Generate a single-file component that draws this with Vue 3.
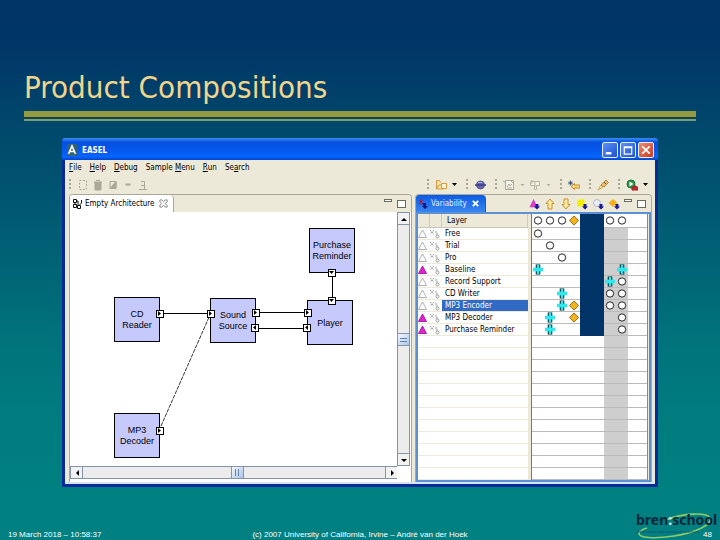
<script setup>
const menus = [
  { key: 'F', rest: 'ile' },
  { key: 'H', rest: 'elp' },
  { key: 'D', rest: 'ebug' },
  { pre: 'Sample ', key: 'M', rest: 'enu' },
  { key: 'R', rest: 'un' },
  { pre: 'Se', key: 'a', rest: 'rch' }
]

const editTools = ['select', 'delete', 'invert', 'remove', 'baseline']
const toolGroups = [
  ['folder', 'drop'],
  ['globe'],
  ['picture', 'dash', 'flag', 'dash'],
  ['back'],
  ['brush'],
  ['run', 'drop']
]
const viewTools = ['addlayer', 'up', 'down', 'addsquare', 'addcircle', 'adddiamond']

// Cell marks: o = circle, d = diamond, p = plus, x = hidden column, . = empty
const heading = 'ooodxxoo'
const layers = [
  { name: 'Free', cells: 'o...xx..' },
  { name: 'Trial', cells: '.o..xx..' },
  { name: 'Pro', cells: '..o.xx..' },
  { name: 'Baseline', cells: 'p...xx.p', on: true },
  { name: 'Record Support', cells: '....xxpo' },
  { name: 'CD Writer', cells: '..p.xxoo' },
  { name: 'MP3 Encoder', cells: '..pdxxoo', selected: true },
  { name: 'MP3 Decoder', cells: '.p.dxx.o', on: true },
  { name: 'Purchase Reminder', cells: '.p..xx.o', on: true }
]
const blankRows = 12

const nodes = [
  { x: 239, y: 16, lines: ['Purchase', 'Reminder'] },
  { x: 44, y: 85, lines: ['CD', 'Reader'] },
  { x: 140, y: 86, lines: ['Sound', 'Source'] },
  { x: 237, y: 88, lines: ['Player'] },
  { x: 44, y: 201, lines: ['MP3', 'Decoder'] }
]
const links = [
  [89, 101, 140, 101],
  [185, 100, 237, 100],
  [185, 116, 237, 116],
  [262, 60, 262, 88]
]
const ports = [
  { x: 89, y: 101, turn: 0 },
  { x: 140, y: 101, turn: 0 },
  { x: 185, y: 100, turn: 0 },
  { x: 185, y: 116, turn: 180 },
  { x: 237, y: 100, turn: 0 },
  { x: 237, y: 116, turn: 180 },
  { x: 262, y: 60, turn: 90 },
  { x: 262, y: 88, turn: 90 },
  { x: 89, y: 218, turn: 0 }
]
</script>

<template>
  <main class="slide">
    <header class="head">
      <h1>Product Compositions</h1>
      <div class="rule"></div>
    </header>

    <section class="window">
      <div class="titlebar">
        <svg class="app-icon" viewBox="0 0 10 12"><rect width="10" height="12" fill="#2f6377" /><path d="M1.5 10 5 2l3.5 8M3 7.5h4" fill="none" stroke="#fff" stroke-width="1.6" /></svg>
        <span class="app-name">EASEL</span>
        <button class="win-btn" aria-label="Minimize"><svg viewBox="0 0 15 15"><path d="M3 11h6" stroke="#fff" stroke-width="2.500" /></svg></button>
        <button class="win-btn" aria-label="Maximize"><svg viewBox="0 0 15 15"><path d="M3.500 4h8v8h-8zM3.500 5h8" fill="none" stroke="#fff" stroke-width="1.300" /></svg></button>
        <button class="win-btn close" aria-label="Close"><svg viewBox="0 0 15 15"><path d="m3.500 3.500 8 8M11.500 3.500l-8 8" stroke="#fff" stroke-width="1.900" /></svg></button>
      </div>

      <nav class="menubar">
        <button v-for="m in menus" :key="m.rest">{{ m.pre }}<u>{{ m.key }}</u>{{ m.rest }}</button>
      </nav>

      <div class="toolbar">
        <div class="group edit">
          <i class="grip"></i>
          <button v-for="t in editTools" :key="t" :aria-label="t">
            <svg viewBox="0 0 12 12" fill="none" stroke="#aca899">
              <path v-if="t === 'select'" d="M2.500 1.500h7v9h-7z" stroke-dasharray="2 1.500" />
              <path v-else-if="t === 'delete'" d="M3 4h6v7H3zM2 3h8L9 4H3zM4 1.500h4" fill="#aca899" />
              <g v-else-if="t === 'invert'"><path d="M3 2.500h6v7H3z" /><path d="M9 2.500v7H3z" fill="#aca899" /></g>
              <path v-else-if="t === 'remove'" d="M3.500 5.500h5" stroke-width="2" />
              <path v-else d="M2 10.500h8M4 2.500h3.500v8M4 6.500h3" />
            </svg>
          </button>
        </div>

        <div v-for="(g, i) in toolGroups" :key="i" class="group">
          <i class="grip"></i>
          <button v-for="(t, j) in g" :key="j" :class="{ small: t === 'drop' || t === 'dash' }" :aria-label="t">
            <svg v-if="t === 'drop'" viewBox="0 0 6 12"><path d="M1 4h5L3.500 7z" /></svg>
            <svg v-else-if="t === 'dash'" viewBox="0 0 6 12"><path d="M1.500 5h4L3.500 7z" fill="#aca899" /></svg>
            <svg v-else viewBox="0 0 12 12" fill="none">
              <g v-if="t === 'folder'" stroke="#d99a3c"><path d="M1.500 10V1.500h3l1 2M1.500 10h7l2.500-4H4z" fill="#fbe4a8" /><path d="M6.500 4.500h5v5h-5z" fill="#fff3d0" /></g>
              <g v-else-if="t === 'globe'"><circle cx="6.500" cy="6" r="4" fill="#6666aa" stroke="#5a5a9c" /><path d="M1 6h11" stroke="#3b3b8a" stroke-width="1.500" /><path d="M4 3.500h4" stroke="#b0b0dd" /></g>
              <g v-else-if="t === 'picture'" stroke="#aca899"><path d="M2.500 1.500h8v9h-8z" fill="#f8f7ef" /><path d="m0 2 3 2M4 8l2-3 1 2 2-2M4 9h5M8 2l2 2" /></g>
              <path v-else-if="t === 'flag'" d="M1.500 2.500h9v4h-3v4h-2v-4h-4zM3 1v4M6 3v5" stroke="#b9b5a6" fill="#f3f1e7" />
              <g v-else-if="t === 'back'"><path d="M3 7.500 6.500 4.500V6H12v3H6.500v1.500z" fill="#f6d985" stroke="#c78b22" /><path d="M2.500 1.500v5M0 4h5M1 2.500l3 3M4 2.500l-3 3" stroke="#263a63" stroke-width=".8" /></g>
              <g v-else-if="t === 'brush'"><path d="m1 11 3-5 2 2z" fill="#fff2b0" stroke="#d4a452" /><path d="m4 6 5-5 2.500 2.500L7 8z" fill="#edbd74" stroke="#c2843b" /><path d="m7 3 2 2" stroke="#555" /></g>
              <g v-else><circle cx="5" cy="5" r="4" fill="#249347" stroke="#18753a" /><path d="M3.500 2.500v5l4-2.500z" fill="#fff" /><path d="M6 8h6v3H6zM8 8V7h2v1" fill="#c82f32" stroke="#9e1c24" /></g>
            </svg>
          </button>
        </div>
      </div>

      <div class="panes">
        <section class="pane editor">
          <div class="tabs">
            <div class="tab">
              <svg viewBox="0 0 10 10" fill="none" stroke="#111"><path d="M1.500.5h3v3h-3zM1.500 5.500h3v3h-3zM5.500 6.500h3v3h-3zM3 3v3M4 2h2v4M9.500 1v3l-2 2" /></svg>
              <span>Empty Architecture</span>
              <button class="tab-x" aria-label="Close tab"><svg viewBox="0 0 10 10"><path d="M1 1h2l2 2 2-2h2v2L7 5l2 2v2H7L5 7 3 9H1V7l2-2-2-2z" fill="#fff" stroke="#777" /></svg></button>
            </div>
            <span class="spacer"></span>
            <button class="min" aria-label="Minimize pane"></button>
            <button class="max" aria-label="Maximize pane"></button>
          </div>
          <div class="editor-body">
            <svg class="canvas">
              <path d="M91 214 140 103" fill="none" stroke="#333" stroke-dasharray="4 1" />
              <line v-for="(l, i) in links" :key="i" :x1="l[0]" :y1="l[1]" :x2="l[2]" :y2="l[3]" stroke="#000" shape-rendering="crispEdges" />
              <g v-for="n in nodes" :key="n.lines[0]">
                <rect :x="n.x" :y="n.y" width="45" height="44" fill="#c6c9fb" stroke="#000" shape-rendering="crispEdges" />
                <text v-for="(t, k) in n.lines" :key="t" :x="n.x + 23" :y="n.y + (n.lines.length === 1 ? 26 : 20 + k * 11)">{{ t }}</text>
              </g>
              <g v-for="(p, i) in ports" :key="i" :transform="`translate(${p.x} ${p.y}) rotate(${p.turn})`">
                <rect x="-3" y="-3" width="7" height="7" fill="#fff" stroke="#000" shape-rendering="crispEdges" />
                <path d="M-1-2v5l3-2.500z" />
              </g>
            </svg>
            <div class="scroll vertical">
              <span class="arrow"><svg viewBox="0 0 8 8"><path d="M1 6h6L4 3z" /></svg></span>
              <span class="track before"></span>
              <span class="thumb"></span>
              <span class="track after"></span>
              <span class="arrow"><svg viewBox="0 0 8 8"><path d="M1 3h6L4 6z" /></svg></span>
            </div>
            <div class="scroll horizontal">
              <span class="arrow"><svg viewBox="0 0 8 8"><path d="M6 1v6L3 4z" /></svg></span>
              <span class="track before"></span>
              <span class="thumb"></span>
              <span class="track after"></span>
              <span class="arrow"><svg viewBox="0 0 8 8"><path d="M3 1v6l3-3z" /></svg></span>
            </div>
          </div>
        </section>

        <section class="pane variability">
          <div class="tabs">
            <div class="tab active">
              <svg viewBox="0 0 10 10"><path d="m1 1 4 4M5 1 1 5M3 0v6" stroke="#b01543" /><path d="M5 4h3v3h2l-3 3-3-3h1z" fill="#0a1a88" /></svg>
              <span>Variability</span>
              <button class="tab-x" aria-label="Close tab"><svg viewBox="0 0 10 10"><path d="m2 2 6 6M8 2 2 8" stroke="#fff" stroke-width="2" /></svg></button>
            </div>
            <span class="spacer"></span>
            <button v-for="t in viewTools" :key="t" class="view-tool" :aria-label="t">
              <svg viewBox="0 0 12 12">
                <path v-if="t === 'addlayer'" d="M2 9 5.500 1.500 9 9z" fill="#e835d5" stroke="#b85ab4" stroke-width=".7" />
                <path v-else-if="t === 'up'" d="m6 1 4 4.500H8V11H4V5.500H2z" fill="#fbe9a3" stroke="#cf912c" />
                <path v-else-if="t === 'down'" d="M6 11 2 6.500h2V1h4v5.500h2z" fill="#fbe9a3" stroke="#cf912c" />
                <path v-else-if="t === 'addsquare'" d="M1.500 1.500h7v7h-7z" fill="#f4ee00" />
                <circle v-else-if="t === 'addcircle'" cx="5" cy="5" r="3.500" fill="#e8eef5" stroke="#b4bcc6" />
                <path v-else d="m5 1 4.500 4L5 9 .5 5z" fill="#f5b01e" />
                <path v-if="t.startsWith('add')" d="M7.500 6h3v2.500H12L9 11.500 6 8.500h1.500z" fill="#18189c" />
              </svg>
            </button>
            <button class="min" aria-label="Minimize pane"></button>
            <button class="max" aria-label="Maximize pane"></button>
          </div>
          <div class="var-body">
            <table class="layers">
              <thead>
                <tr><th></th><th></th><th class="name">Layer</th></tr>
              </thead>
              <tbody>
                <tr v-for="l in layers" :key="l.name" :class="{ selected: l.selected }">
                  <td><svg viewBox="0 0 10 10"><path d="M4.500 1 .5 8.500h8z" :fill="l.on ? '#e322d6' : '#fff'" :stroke="l.on ? '#9c1596' : '#a4a8ae'" stroke-width=".9" /></svg></td>
                  <td><svg viewBox="0 0 10 10" fill="none" stroke="#999"><path d="m0 1 4 4M4 1 0 5M5 3h2v3" stroke-dasharray="2 1" /><circle cx="7.500" cy="7.500" r="1.500" /></svg></td>
                  <td class="name">{{ l.name }}</td>
                </tr>
                <tr v-for="n in blankRows" :key="n"><td></td><td></td><td class="name"></td></tr>
              </tbody>
            </table>
            <table class="matrix">
              <thead>
                <tr>
                  <th v-for="(c, i) in heading" :key="i" :class="{ hidden: c === 'x' }">
                    <svg v-if="c !== 'x'" viewBox="0 0 12 12">
                      <circle v-if="c === 'o'" cx="6" cy="6" r="4" fill="#fff" stroke="#111" />
                      <path v-else d="m6 1 5 5-5 5-5-5z" fill="#f2b41d" stroke="#8a6412" />
                    </svg>
                  </th>
                  <th class="rest"></th>
                </tr>
              </thead>
              <tbody>
                <tr v-for="l in layers" :key="l.name">
                  <td v-for="(c, i) in l.cells" :key="i" :class="{ hidden: c === 'x', shaded: i > 5 }">
                    <svg v-if="c !== 'x' && c !== '.'" viewBox="0 0 12 12">
                      <circle v-if="c === 'o'" cx="6" cy="6" r="4" fill="#fff" stroke="#111" />
                      <path v-else-if="c === 'd'" d="m6 1 5 5-5 5-5-5z" fill="#f2b41d" stroke="#8a6412" />
                      <g v-else><path d="M3.500.5h5v11h-5z" fill="#0d4048" /><path d="M.5 4h11v4H.5z" fill="#2ee8ee" /><path d="M4.800 1h2.400v10H4.800z" fill="#2ee8ee" /></g>
                    </svg>
                  </td>
                  <td class="rest"></td>
                </tr>
                <tr v-for="n in blankRows" :key="n">
                  <td v-for="i in 8" :key="i" :class="{ shaded: i > 6 }"></td>
                  <td class="rest"></td>
                </tr>
              </tbody>
            </table>
          </div>
        </section>
      </div>
    </section>

    <footer class="foot">
      <span>19 March 2018 – 10:58:37</span>
      <span class="copyright">(c) 2007 University of California, Irvine – André van der Hoek</span>
      <div class="brand">
        <svg class="logo" viewBox="0 -5 84 32">
          <path d="M31 7C48 0 72-1 75 5c3 7-16 15-36 18S3 25 4 20c1-2 4-4 8-5" fill="none" stroke="#8fca68" stroke-width="1.600" />
          <text x="1" y="12" class="word">bren<tspan fill="#d8edf0">:</tspan>school</text>
          <text x="2" y="20" class="sub">information and computer sciences</text>
        </svg>
        <span class="page">48</span>
      </div>
    </footer>
  </main>
</template>

<style>
body {
  background: #008080;
}
</style>

<style scoped>
.slide {
  display: flex;
  flex-direction: column;
  min-height: 100vh;
  background: linear-gradient(#003366, #003667 8%, #00466b 22%, #005f74 45%, #00747b 64%, #007d7f 80%, #008080 92%);
  font-family: "DejaVu Sans Condensed", "DejaVu Sans", sans-serif;
  font-size: 8px;
  color: #000;
}
.slide *,
.slide *::before {
  box-sizing: border-box;
}
button {
  display: flex;
  align-items: center;
  justify-content: center;
  padding: 0;
  border: 0;
  background: none;
  font: inherit;
  color: inherit;
}
.spacer {
  flex: 1;
}

.head {
  padding: 67px 24px 17px;
}
h1 {
  margin: 0;
  font-size: 31px;
  font-weight: 400;
  line-height: 40px;
  color: #f0d58c;
}
.rule {
  height: 10px;
  margin-top: 4px;
  border-top: 6px solid #949a40;
  border-bottom: 2px solid #74a07c;
  background: #173f45;
}

.window {
  margin: 0 62px;
  border: 3px solid #0a2a9c;
  border-top: 0;
  border-radius: 3px 3px 0 0;
  background: #ece9d8;
}
.titlebar {
  display: flex;
  align-items: center;
  gap: 2px;
  height: 22px;
  margin: 0 -3px;
  padding: 2px 4px 0 5px;
  border-radius: 3px 3px 0 0;
  background: linear-gradient(#3b8cf5, #0550e0 20%, #0559ee 60%, #0566ff 85%, #0345c8);
  color: #fff;
}
.app-icon {
  width: 10px;
  height: 12px;
}
.app-name {
  flex: 1;
  margin-left: 3px;
  font-weight: 700;
}
.win-btn {
  width: 16px;
  height: 16px;
  border: 1px solid #e6efff;
  border-radius: 2px;
  background: linear-gradient(135deg, #5f92f5, #1c50d4);
}
.win-btn.close {
  background: linear-gradient(135deg, #ee8a70, #c63c1e);
}
.win-btn svg {
  width: 14px;
  height: 14px;
}
.menubar {
  display: flex;
  gap: 8px;
  height: 15px;
  padding: 0 4px;
}
.menubar button {
  white-space: pre;
}

.toolbar {
  display: flex;
  gap: 7px;
  height: 19px;
  padding: 0 5px 0 4px;
}
.group {
  display: flex;
  align-items: center;
}
.edit {
  margin-right: auto;
}
.grip {
  width: 2px;
  height: 12px;
  margin-right: 4px;
  background: repeating-linear-gradient(#aca899 0 2px, transparent 2px 4px);
}
.toolbar button {
  width: 16px;
}
.toolbar .edit button {
  width: 15px;
}
.toolbar button.small {
  width: 10px;
}
.toolbar svg {
  width: 12px;
  height: 12px;
}
.toolbar .small svg {
  width: 6px;
}

.panes {
  display: flex;
  gap: 3px;
  padding: 0 3px 0 4px;
  border-bottom: 2px solid #d5e4f4;
}
.pane {
  display: flex;
  flex-direction: column;
  border: 1px solid #aca899;
  border-bottom: 0;
  border-radius: 4px 4px 0 0;
}
.editor {
  flex: 1;
  min-width: 0;
  background: #fff;
}
.variability {
  flex: 0 0 237px;
}
.tabs {
  display: flex;
  align-items: center;
  height: 17px;
  padding-right: 2px;
  border-radius: 3px 3px 0 0;
  background: #ece9d8;
}
.tab {
  display: flex;
  align-items: center;
  gap: 3px;
  height: 17px;
  padding: 0 4px 0 2px;
  border-right: 1px solid #aca899;
  border-radius: 3px 4px 0 0;
  background: #fff;
}
.tab > svg {
  width: 10px;
  height: 10px;
}
.tab-x {
  width: 10px;
  margin-left: 1px;
}
.tab-x svg {
  width: 9px;
  height: 9px;
}
.tab.active {
  border-right-color: #1a58c8;
  background: linear-gradient(#0a5ae4, #3a86ee);
  color: #e8f2ff;
}
.min,
.max {
  width: 9px;
  height: 8px;
  margin: 0 3px 0 2px;
  border: 1px solid #6b6a60;
  background: #fff;
}
.min {
  width: 8px;
  height: 3px;
  margin-bottom: 6px;
}
.view-tool {
  width: 16px;
}
.view-tool svg {
  width: 12px;
  height: 12px;
}

.editor-body {
  flex: 1;
  display: grid;
  grid-template: 1fr 13px / 1fr 13px;
  padding: 0 1px 3px 0;
}
.canvas {
  width: 100%;
  height: 100%;
  min-width: 0;
}
.canvas text {
  font-family: "Liberation Sans", sans-serif;
  font-size: 9px;
  text-anchor: middle;
}
.scroll {
  display: flex;
  background: #ececec;
  border: 1px solid #8494ab;
}
.scroll.vertical {
  flex-direction: column;
}
.scroll.horizontal {
  border-right: 0;
}
.scroll svg {
  display: block;
  width: 8px;
  height: 8px;
}
.arrow {
  display: grid;
  place-items: center;
  flex: 0 0 11px;
  background: #f2f2f2;
}
.before {
  flex: 110;
}
.after {
  flex: 108;
}
.horizontal .before {
  flex: 149;
}
.horizontal .after {
  flex: 142;
}
.vertical .track {
  border-top: 1px solid #8494ab;
  border-bottom: 1px solid #8494ab;
}
.horizontal .track {
  border-left: 1px solid #8494ab;
  border-right: 1px solid #8494ab;
}
.thumb {
  flex: 0 0 11px;
  background: linear-gradient(135deg, #f4f9ff, #a9c4e8);
  display: grid;
  place-items: center;
}
.thumb::before {
  content: "";
  width: 7px;
  height: 4px;
  border: 1px solid #6381a9;
  border-width: 1px 0;
}
.horizontal .thumb::before {
  width: 4px;
  height: 7px;
  border-width: 0 1px;
}

.var-body {
  display: flex;
  gap: 3px;
  padding: 0 1px 0 0;
  border: 2px solid #5b91d4;
  background: #ece9d8;
}
table {
  border-collapse: separate;
  border-spacing: 0;
  table-layout: fixed;
  background: #fff;
}
th,
td {
  height: 12px;
  padding: 0;
  line-height: 11px;
  font-weight: 400;
  text-align: left;
  white-space: nowrap;
  border-bottom: 1px solid #efe9da;
}
th {
  height: 14px;
}
table svg {
  display: block;
}
.layers {
  flex: 0 0 110px;
}
.layers th {
  background: #ece9d8;
  border-right: 1px solid #d0ccba;
  border-bottom: 1px solid #cbc7b8;
}
.layers th,
.layers td {
  width: 12px;
}
.layers svg {
  width: 10px;
  height: 10px;
}
.layers .name {
  width: 86px;
  padding-left: 3px;
}
.layers th.name {
  padding-left: 5px;
}
.selected .name {
  background: #316ac5;
  color: #fff;
}
.matrix {
  flex: 1;
  border-left: 1px solid #777;
  border-right: 1px solid #5b91d4;
}
.matrix th,
.matrix td {
  width: 12px;
  border-bottom-color: #bbb;
}
.matrix .rest {
  width: auto;
}
.matrix svg {
  width: 12px;
  height: 11px;
}
.matrix .shaded {
  background: #cecece;
}
.matrix .hidden {
  background: #003366;
  border-bottom-color: #003366;
}

.foot {
  display: grid;
  grid-template-columns: 1fr auto 1fr;
  align-items: end;
  margin-top: auto;
  padding: 0 8px;
  font-family: "Liberation Sans", sans-serif;
  line-height: 11px;
  color: #fff;
}
.brand {
  display: grid;
  justify-items: end;
  margin-right: -7px;
}
.brand > * {
  grid-area: 1 / 1;
}
.logo {
  width: 84px;
  height: 32px;
}
.word {
  font-family: "Noto Sans", sans-serif;
  font-size: 14px;
  font-weight: 700;
  fill: #06283c;
}
.sub {
  font-size: 4px;
  fill: #0a4b70;
}
.page {
  align-self: end;
  padding-right: 7px;
}
</style>
